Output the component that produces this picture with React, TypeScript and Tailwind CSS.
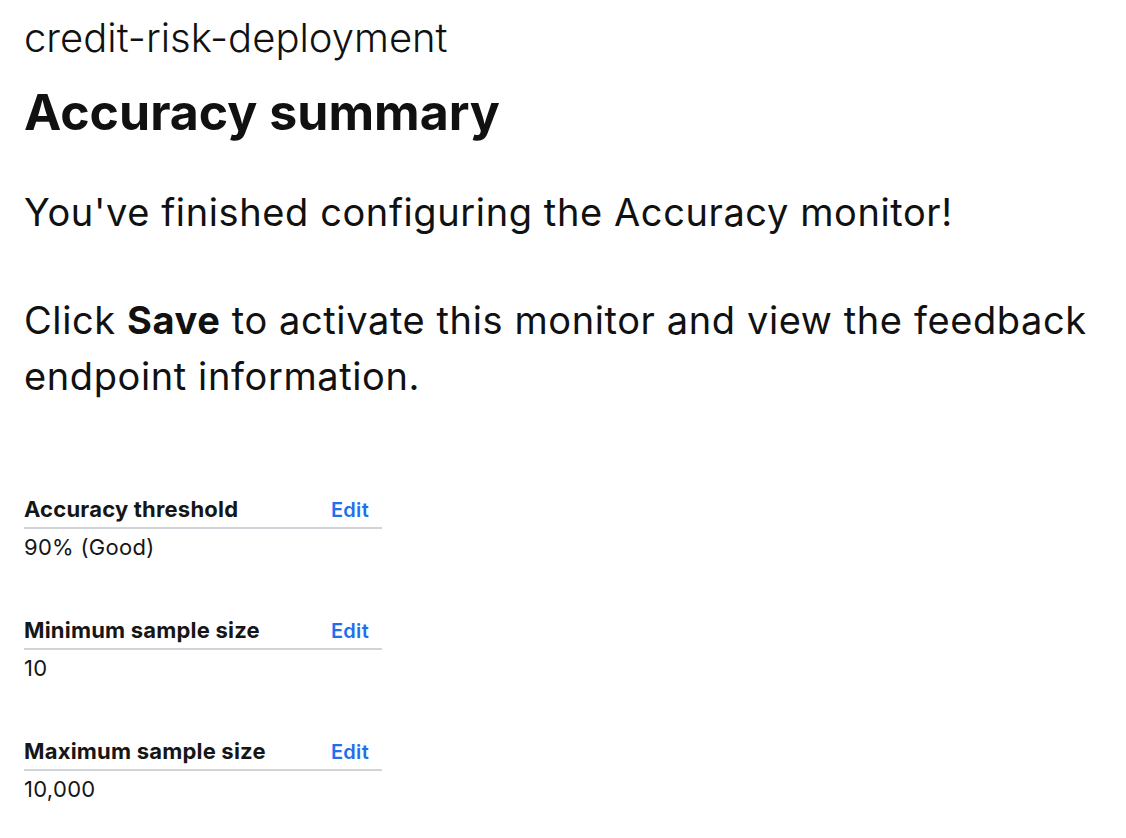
import React from "react";

const font = { fontFamily: 'Inter, "Noto Sans", Arial, sans-serif' };

function Row({ label, value }: { label: string; value: string }) {
  return (
    <div className="w-[358px] mb-[55px]">
      <div className="flex items-baseline justify-between border-b-2 border-[#d0d4d8] pb-[3px]">
        <span className="text-[22px] leading-[28px] font-bold tracking-[0.2px] text-[#161616]">{label}</span>
        <span className="text-[20px] leading-[28px] font-semibold tracking-[0.3px] text-[#1f6ff0] mr-[13px]">Edit</span>
      </div>
      <div className="text-[22px] leading-[28px] mt-[4px] tracking-[0.3px] text-[#161616]">{value}</div>
    </div>
  );
}

export default function App() {
  return (
    <div className="min-h-[838px] w-[1126px] bg-white text-[#111] pl-[24px] pt-[14px]" style={font}>
      <div className="text-[40px] leading-[48px] font-light">credit-risk-deployment</div>
      <h1 className="text-[50px] leading-[56px] font-bold mt-[22px]">Accuracy summary</h1>
      <p className="text-[38px] leading-[56px] tracking-[0.6px] mt-[44px]">You've finished configuring the Accuracy monitor!</p>
      <p className="text-[38px] leading-[56px] tracking-[0.6px] mt-[52px]">
        Click <b className="font-bold">Save</b> to activate this monitor and view the feedback endpoint information.
      </p>
      <div className="mt-[91px]">
        <Row label="Accuracy threshold" value="90% (Good)" />
        <Row label="Minimum sample size" value="10" />
        <Row label="Maximum sample size" value="10,000" />
      </div>
    </div>
  );
}
